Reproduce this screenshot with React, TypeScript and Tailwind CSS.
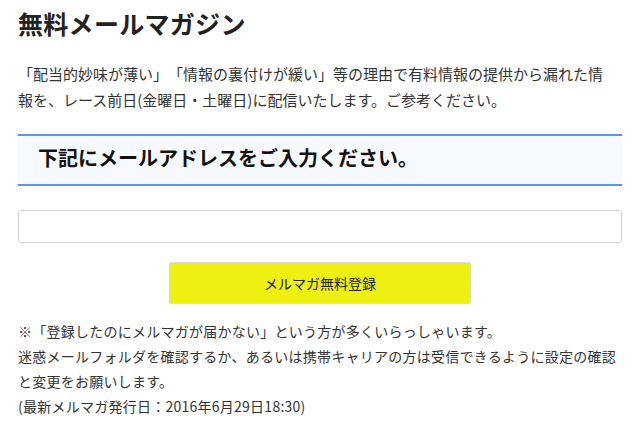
export default function App() {
  return (
    <div className="w-[640px] h-[427px] bg-white px-[18px] text-[#333] font-['Noto_Sans_CJK_JP',sans-serif] [text-spacing-trim:space-all] overflow-hidden">
      {/* Title */}
      <h1 className="mt-[7px] h-[32px] leading-[32px] text-[25px] tracking-[0.3px] font-bold text-[#222]">
        無料メールマガジン
      </h1>

      {/* Intro */}
      <p className="mt-[22px] text-[15px] leading-[26px] whitespace-nowrap">
        「配当的妙味が薄い」「情報の裏付けが緩い」等の理由で有料情報の提供から漏れた情
        <br />
        報を、レース前日(金曜日・土曜日)に配信いたします。ご参考ください。
      </p>

      {/* Heading box */}
      <div className="mt-[21px] h-[52px] flex items-center border-y-2 border-[#5e95e8] bg-[#f6faff] pl-[20px]">
        <h2 className="text-[20px] font-bold text-[#111] -mt-[5px]">下記にメールアドレスをご入力ください。</h2>
      </div>

      {/* Email input */}
      <input
        type="email"
        className="mt-[24px] block w-full h-[33px] rounded-[3px] border border-[#d4d4d4] bg-white px-2 text-[14px] outline-none"
      />

      {/* Submit */}
      <div className="mt-[19px] flex justify-center">
        <button className="w-[302px] h-[42px] rounded-[2px] border border-[#d9d9d9] bg-[#eef011] text-[14px] text-[#222]">
          メルマガ無料登録
        </button>
      </div>

      {/* Notes */}
      <div className="mt-[15px] text-[14px] leading-[25px] tracking-[0.25px] whitespace-nowrap">
        <p>※「登録したのにメルマガが届かない」という方が多くいらっしゃいます。</p>
        <p>迷惑メールフォルダを確認するか、あるいは携帯キャリアの方は受信できるように設定の確認</p>
        <p>と変更をお願いします。</p>
        <p>(最新メルマガ発行日：2016年6月29日18:30)</p>
      </div>
    </div>
  );
}
